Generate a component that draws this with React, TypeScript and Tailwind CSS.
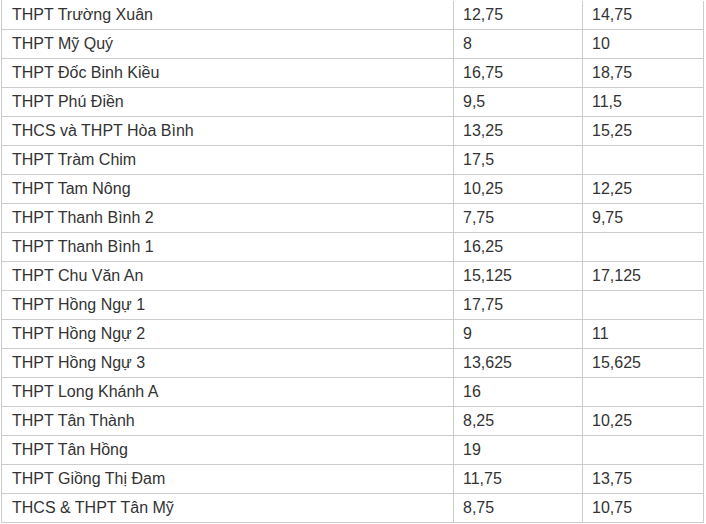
const rows: [string, string, string][] = [
  ["THPT Trường Xuân", "12,75", "14,75"],
  ["THPT Mỹ Quý", "8", "10"],
  ["THPT Đốc Binh Kiều", "16,75", "18,75"],
  ["THPT Phú Điền", "9,5", "11,5"],
  ["THCS và THPT Hòa Bình", "13,25", "15,25"],
  ["THPT Tràm Chim", "17,5", ""],
  ["THPT Tam Nông", "10,25", "12,25"],
  ["THPT Thanh Bình 2", "7,75", "9,75"],
  ["THPT Thanh Bình 1", "16,25", ""],
  ["THPT Chu Văn An", "15,125", "17,125"],
  ["THPT Hồng Ngự 1", "17,75", ""],
  ["THPT Hồng Ngự 2", "9", "11"],
  ["THPT Hồng Ngự 3", "13,625", "15,625"],
  ["THPT Long Khánh A", "16", ""],
  ["THPT Tân Thành", "8,25", "10,25"],
  ["THPT Tân Hồng", "19", ""],
  ["THPT Giồng Thị Đam", "11,75", "13,75"],
  ["THCS & THPT Tân Mỹ", "8,75", "10,75"],
]

export default function App() {
  return (
    <div className="bg-white w-[706px] h-[524px] overflow-hidden font-['Liberation_Sans',Arial,sans-serif] text-[16px] text-[#333]">
      <div className="ml-px w-[703px] pt-px border-l border-[#cccccc]">
        {rows.map(([school, score1, score2]) => (
          <div key={school} className="grid grid-cols-[452px_129px_121px] h-[29px] border-b border-[#cccccc]">
            <div className="border-r border-[#cccccc] pl-[10px] flex items-center">{school}</div>
            <div className="border-r border-[#cccccc] pl-[9px] flex items-center">{score1}</div>
            <div className="border-r border-[#cccccc] pl-[9px] flex items-center">{score2}</div>
          </div>
        ))}
      </div>
    </div>
  )
}
